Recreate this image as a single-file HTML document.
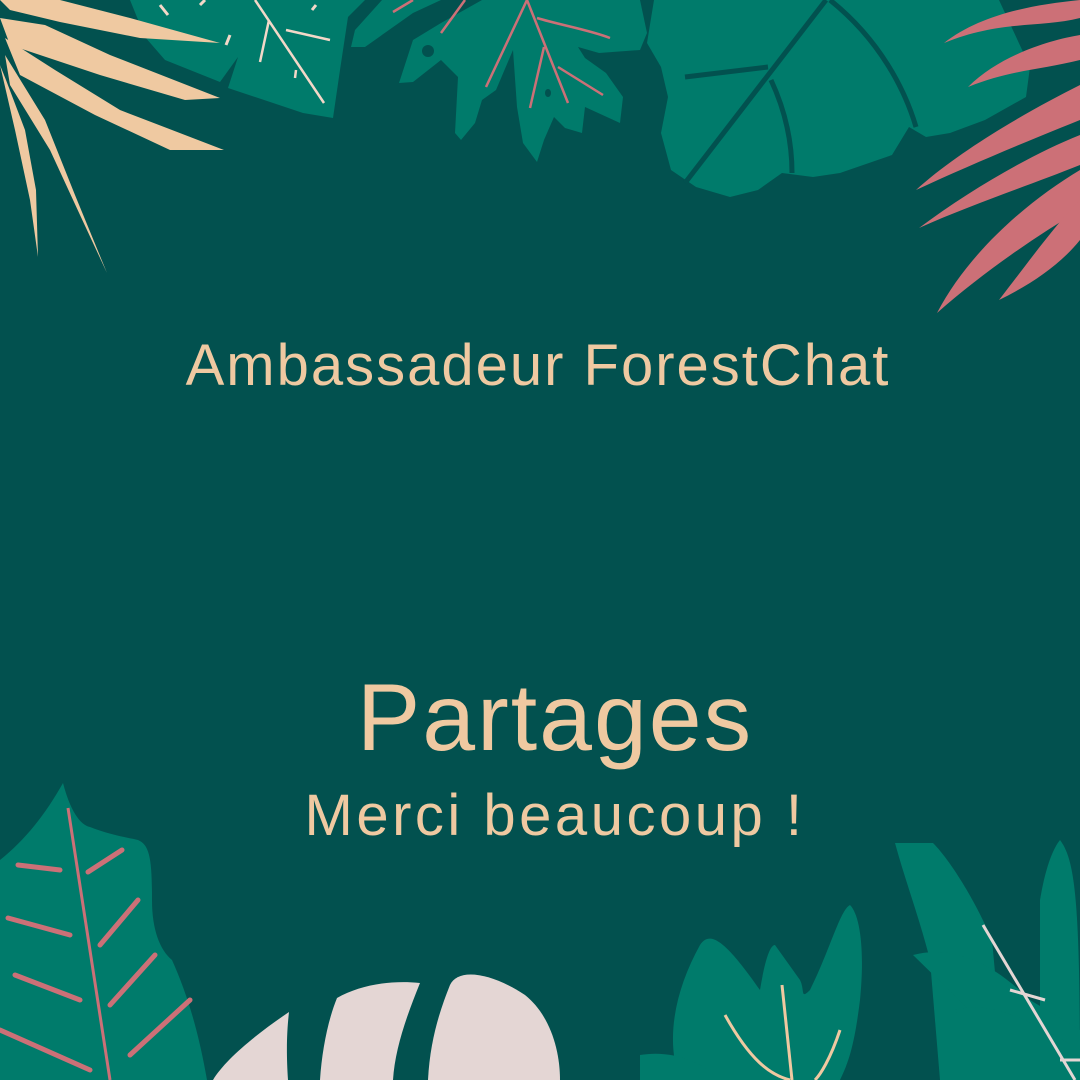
<!DOCTYPE html>
<html><head><meta charset="utf-8"><style>
html,body{margin:0;padding:0}
body{width:1080px;height:1080px;background:#02514f;position:relative;overflow:hidden;font-family:"Liberation Sans",sans-serif;color:#efc9a1}
svg{position:absolute;left:0;top:0}
.t{position:absolute;left:0;width:1080px;text-align:center;white-space:nowrap}
</style></head><body>
<svg width="1080" height="1080" viewBox="0 0 1080 1080">
<!-- top-left green leaf -->
<path d="M130 0 L365 0 L348 17 L340 70 L333 118 L303 113 L228 88 L238 57 L220 82 L165 60 L145 37 Z" fill="#007b6b"/>
<path d="M255 0 L324 103 M286 30 L330 40 M269 20 L260 62 M296 70 L295 78" stroke="#f3d8c8" stroke-width="2.5" fill="none"/>
<path d="M160 5 L168 15 M205 0 L200 5 M230 35 L226 45 M316 5 L312 10" stroke="#f3d8c8" stroke-width="3" fill="none"/>
<!-- shard -->
<path d="M351 47 L365 47 L413 13 L441 0 L382 0 L355 30 Z" fill="#007b6b"/>
<!-- center leaf -->
<path d="M399 83 L413 40 L441 23 L482 0 L640 0 L647 33 L640 50 L599 53 L578 47 L585 58 L606 73 L623 97 L620 123 L585 107 L582 133 L565 128 L554 117 L544 140 L537 162 L523 143 L517 107 L513 50 L496 90 L482 100 L475 123 L461 140 L455 133 L458 77 L441 60 L413 82 Z" fill="#007b6b"/>
<path d="M527 0 L568 103 M527 0 L486 87 M544 47 L530 108 M537 18 C560 25 590 30 610 38 M558 67 L603 95 M413 0 L393 12 M465 0 L441 33" stroke="#cc7077" stroke-width="2.5" fill="none"/>
<ellipse cx="428" cy="51" rx="6" ry="6" fill="#02514f"/>
<ellipse cx="548" cy="93" rx="3" ry="4" fill="#02514f"/>
<!-- big right leaf -->
<path d="M654 0 L647 43 L661 67 L668 97 L661 133 L671 170 L696 187 L730 197 L758 190 L782 173 L813 177 L840 173 L892 155 L909 127 L926 137 L950 133 L985 120 L1026 97 L1030 67 L999 0 Z" fill="#007b6b"/>
<path d="M826 0 L685 183" stroke="#02514f" stroke-width="5" fill="none"/>
<path d="M830 0 C880 40 905 90 916 127" stroke="#02514f" stroke-width="5" fill="none"/>
<path d="M685 77 L768 67 M771 80 C785 110 792 140 792 173" stroke="#02514f" stroke-width="5" fill="none"/>
<!-- pink palm right -->
<g fill="#cc7077">
<path d="M944 43 C980 15 1030 5 1080 0 L1080 18 C1040 28 1000 20 944 43Z"/>
<path d="M968 87 C1000 55 1050 40 1080 35 L1080 60 C1040 70 1010 70 968 87Z"/>
<path d="M916 190 C960 150 1030 110 1080 85 L1080 120 C1030 140 970 165 916 190Z"/>
<path d="M919 228 C970 190 1030 155 1080 135 L1080 165 C1030 185 970 205 919 228Z"/>
<path d="M937 313 C970 250 1030 200 1080 170 L1080 210 C1030 240 980 275 937 313Z"/>
<path d="M999 300 C1030 260 1055 225 1080 200 L1080 240 C1060 265 1030 285 999 300Z"/>
</g>
<!-- peach palm left -->
<g fill="#efc9a1">
<path d="M0 0 L60 0 L130 18 L220 43 L140 38 L60 22 L10 10 Z"/>
<path d="M0 18 L45 25 L110 55 L220 98 L185 100 L100 75 L10 45 Z"/>
<path d="M5 38 L55 70 L120 110 L224 150 L170 150 L95 115 L20 75 Z"/>
<path d="M5 55 L45 120 L75 195 L107 273 L80 215 L50 150 L10 85 Z"/>
<path d="M0 65 L15 130 L30 200 L38 257 L36 190 L25 130 L6 80 Z"/>
</g>
<!-- bottom left green leaf -->
<path d="M63 783 C70 810 80 825 90 827 C110 835 130 838 138 840 C150 845 152 860 152 900 C152 930 160 950 172 960 C190 1000 200 1040 207 1080 L0 1080 L0 860 C25 840 45 815 63 783Z" fill="#007b6b"/>
<path d="M68 808 L110 1080" stroke="#cc7077" stroke-width="3" fill="none"/>
<g stroke="#cc7077" stroke-width="5" stroke-linecap="round" fill="none">
<path d="M18 865 L60 870 M88 872 L122 850 M8 918 L70 935 M100 945 L138 900 M15 975 L80 1000 M110 1005 L155 955 M0 1030 L90 1070 M130 1055 L190 1000"/>
</g>
<!-- pale monstera -->
<path d="M289 1012 C255 1035 225 1060 213 1080 L288 1080 C286 1050 287 1030 289 1012Z" fill="#e4d6d4"/>
<path d="M337 998 C360 985 390 980 420 983 C405 1020 395 1050 393 1080 L320 1080 C322 1050 328 1020 337 998Z" fill="#e4d6d4"/>
<path d="M450 985 C458 968 490 972 525 995 C550 1015 560 1050 560 1080 L428 1080 C430 1040 440 1010 450 985Z" fill="#e4d6d4"/>
<!-- bottom right plants -->
<path d="M895 843 L933 843 C950 860 975 900 992 940 L1005 1080 L940 1080 L930 960 C920 920 905 880 895 843Z" fill="#007b6b"/>
<path d="M1060 840 C1075 860 1080 900 1080 1080 L1040 1080 L1040 900 C1045 870 1052 850 1060 840Z" fill="#007b6b"/>
<path d="M913 955 C950 945 990 960 1030 1000 L1080 1030 L1080 1060 L1000 1040 Z" fill="#007b6b"/>
<path d="M955 1010 C990 1000 1030 1020 1080 1050 L1080 1080 L990 1080 Z" fill="#007b6b"/>
<path d="M983 925 L1075 1080" stroke="#e4d6d4" stroke-width="3" fill="none"/>
<path d="M1010 990 L1045 1000 M1060 1060 L1080 1060" stroke="#e4d6d4" stroke-width="3" fill="none"/>
<path d="M700 945 C710 930 725 940 760 990 C765 960 770 945 775 945 L800 980 C805 990 800 1000 810 990 C830 950 840 910 850 905 C860 915 865 950 860 1000 C855 1040 850 1060 840 1080 L680 1080 C665 1040 675 990 700 945Z" fill="#007b6b"/>
<path d="M640 1055 C670 1050 700 1060 720 1080 L640 1080 Z" fill="#007b6b"/>
<path d="M725 1015 C750 1060 770 1075 790 1080 M782 985 L792 1080 M840 1030 C830 1060 820 1075 815 1080" stroke="#efc9a1" stroke-width="3" fill="none"/>
</svg>
<div class="t" style="top:332px;left:-2px;font-size:58px;letter-spacing:2px;">Ambassadeur ForestChat</div>
<div class="t" style="top:664px;left:15px;font-size:95px;letter-spacing:2px;">Partages</div>
<div class="t" style="top:782px;left:15px;font-size:58px;letter-spacing:3.5px;">Merci beaucoup !</div>
</body></html>
